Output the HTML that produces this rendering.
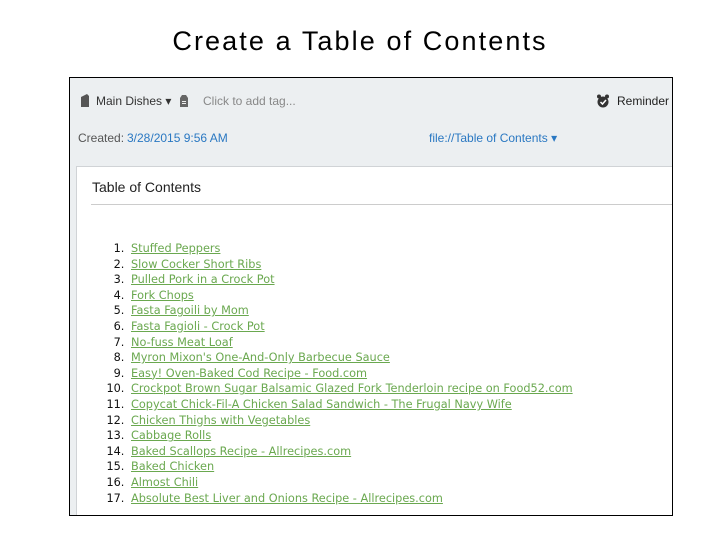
<!DOCTYPE html>
<html><head><style>
body{margin:0;width:720px;height:540px;background:#fff;position:relative;font-family:"Liberation Sans",sans-serif;overflow:hidden}
.title{position:absolute;top:26px;left:0;width:720px;text-align:center;font-size:27px;letter-spacing:2.1px;color:#000}
.frame{position:absolute;left:69px;top:77px;width:602px;height:437px;border:1px solid #000;background:#eceff1;overflow:hidden}
.t{position:absolute;font-size:12px;color:#444;white-space:nowrap}
.blue{color:#2a78c2}
.box{position:absolute;left:6px;top:88px;width:600px;height:360px;background:#fff;border-left:1px solid #d0d3d6;border-top:1px solid #d0d3d6}
.h{position:absolute;left:15px;top:12px;font-size:14px;color:#222}
.rule{position:absolute;left:14px;right:0;top:37px;border-top:1px solid #ccc}
ol{position:absolute;left:0;top:74px;margin:0;padding-left:51px;font-family:"DejaVu Sans",sans-serif;font-size:11.3px;line-height:15.6px;color:#111}
ol li{padding-left:3px}
ol a{color:#6aa84f;text-decoration:underline}
</style></head><body>
<div class="title">Create a Table of Contents</div>
<div class="frame">
<svg style="position:absolute;left:9px;top:16px" width="12" height="14"><path d="M2 3 L8 0 L10 2 L10 13 L2 13 Z" fill="#555"/></svg>
<div class="t" style="left:26px;top:16px;color:#333">Main Dishes ▾</div>
<svg style="position:absolute;left:109px;top:16px" width="10" height="14"><path d="M3 1 L7 1 L9 4 L9 13 L1 13 L1 4 Z" fill="#666"/><rect x="3" y="7" width="4" height="1" fill="#eee"/><rect x="3" y="9" width="4" height="1" fill="#eee"/></svg>
<div class="t" style="left:133px;top:16px;color:#888">Click to add tag...</div>
<svg style="position:absolute;left:526px;top:16px" width="14" height="14"><circle cx="7" cy="8" r="5.5" fill="#333"/><circle cx="3" cy="2.5" r="2" fill="#333"/><circle cx="11" cy="2.5" r="2" fill="#333"/><path d="M4.5 8 L6.5 10 L10 6" stroke="#fff" stroke-width="1.5" fill="none"/></svg>
<div class="t" style="left:547px;top:16px;color:#222">Reminder</div>
<div class="t" style="left:8px;top:53px;color:#555">Created:</div>
<div class="t blue" style="left:57px;top:53px">3/28/2015 9:56 AM</div>
<div class="t blue" style="left:359px;top:53px">file://Table of Contents ▾</div>
<div class="box">
<div class="h">Table of Contents</div>
<div class="rule"></div>
<ol>
<li><a>Stuffed Peppers</a></li>
<li><a>Slow Cocker Short Ribs</a></li>
<li><a>Pulled Pork in a Crock Pot</a></li>
<li><a>Fork Chops</a></li>
<li><a>Fasta Fagoili by Mom</a></li>
<li><a>Fasta Fagioli - Crock Pot</a></li>
<li><a>No-fuss Meat Loaf</a></li>
<li><a>Myron Mixon's One-And-Only Barbecue Sauce</a></li>
<li><a>Easy! Oven-Baked Cod Recipe - Food.com</a></li>
<li><a>Crockpot Brown Sugar Balsamic Glazed Fork Tenderloin recipe on Food52.com</a></li>
<li><a>Copycat Chick-Fil-A Chicken Salad Sandwich - The Frugal Navy Wife</a></li>
<li><a>Chicken Thighs with Vegetables</a></li>
<li><a>Cabbage Rolls</a></li>
<li><a>Baked Scallops Recipe - Allrecipes.com</a></li>
<li><a>Baked Chicken</a></li>
<li><a>Almost Chili</a></li>
<li><a>Absolute Best Liver and Onions Recipe - Allrecipes.com</a></li>
</ol>
</div>
</div>
</body></html>
